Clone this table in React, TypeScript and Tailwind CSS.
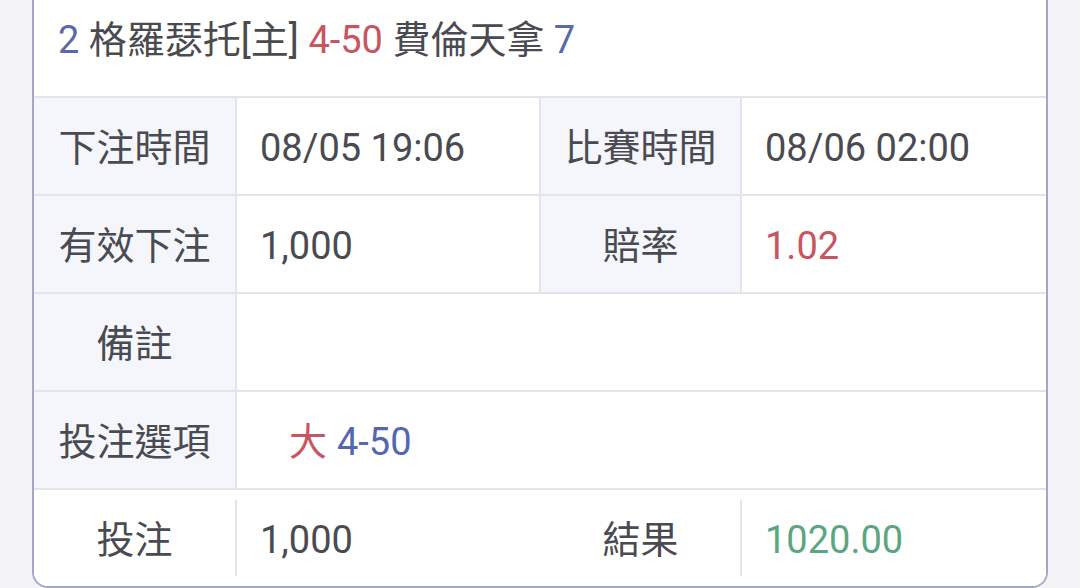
import React from 'react';

const font = { fontFamily: 'Roboto, "Noto Sans CJK TC", sans-serif' };

function Label({ children, bg = true }: { children: React.ReactNode; bg?: boolean }) {
  return (
    <div className={`flex items-center justify-center pt-[4px] ${bg ? 'bg-[#f5f6fb]' : ''}`}>
      {children}
    </div>
  );
}

function Value({ children, className = '' }: { children?: React.ReactNode; className?: string }) {
  return <div className={`flex items-center pt-[4px] pl-[23px] bg-white ${className}`}>{children}</div>;
}

export default function App() {
  return (
    <div className="w-[1080px] h-[588px] bg-[#f3f3f5] overflow-hidden text-[#4a4b50]" style={font}>
      <div className="ml-[32px] w-[1016px] bg-white border-2 border-t-0 border-[#a3a6c4] rounded-b-[16px] overflow-hidden text-[38px] leading-none">
        <div className="h-[98px] pl-[24px] pt-[21px] border-b-2 border-[#e4e5ea]">
          <span className="text-[#5b6aa6]">2</span> 格羅瑟托[主]{' '}
          <span className="text-[#c9555f]">4-50</span> 費倫天拿{' '}
          <span className="text-[#5b6aa6]">7</span>
        </div>

        <div className="grid grid-cols-[201px_2px_302px_2px_199px_2px_1fr] grid-rows-[96px_2px_96px_2px_96px_2px_96px_2px] bg-[#e4e5ea]">
          {/* row 1 */}
          <Label>下注時間</Label>
          <div />
          <Value>08/05 19:06</Value>
          <div />
          <Label>比賽時間</Label>
          <div />
          <Value>08/06 02:00</Value>
          <div className="col-span-7" />
          {/* row 2 */}
          <Label>有效下注</Label>
          <div />
          <Value>1,000</Value>
          <div />
          <Label>賠率</Label>
          <div />
          <Value className="text-[#c9555f]">1.02</Value>
          <div className="col-span-7" />
          {/* row 3 */}
          <Label>備註</Label>
          <div />
          <Value className="col-span-5" />
          <div className="col-span-7" />
          {/* row 4 */}
          <Label>投注選項</Label>
          <div />
          <Value className="col-span-5 pl-[52px]">
            <span className="text-[#c9555f]">大</span>
            <span className="ml-[10px] text-[#5367b3]">4-50</span>
          </Value>
          <div className="col-span-7" />
        </div>

        <div className="grid grid-cols-[201px_2px_302px_2px_199px_2px_1fr] h-[96px] bg-white">
          <Label bg={false}>投注</Label>
          <div className="my-[10px] bg-[#e4e5ea]" />
          <Value>1,000</Value>
          <div />
          <Label bg={false}>結果</Label>
          <div className="my-[10px] bg-[#e4e5ea]" />
          <Value className="text-[#5aa680]">1020.00</Value>
        </div>
      </div>
    </div>
  );
}
